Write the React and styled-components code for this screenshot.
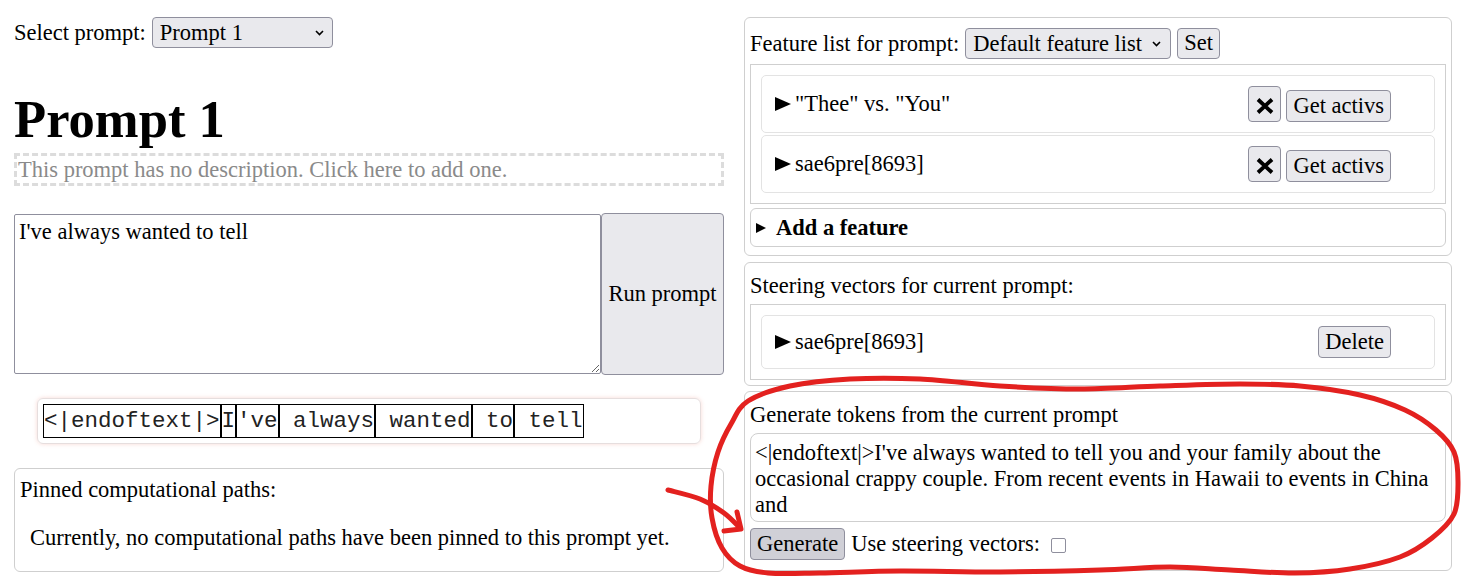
import React from 'react'
import styled, { createGlobalStyle } from 'styled-components'

const GlobalStyle = createGlobalStyle`
  * { box-sizing: border-box; }
  body {
    margin: 0;
    background: #fff;
    color: #000;
    font-family: "Liberation Serif", "Times New Roman", serif;
    font-size: 22.5px;
  }
  button, select, textarea, input {
    font: inherit;
    color: inherit;
  }
`

const Page = styled.div`
  position: relative;
  display: grid;
  grid-template-columns: 710px 708px;
  column-gap: 20px;
  align-items: start;
  width: 1466px;
  height: 580px;
  padding: 17px 14px 0;
  overflow: hidden;
`

const Column = styled.div`
  display: flex;
  flex-direction: column;
  min-width: 0;
`

const Row = styled.div`
  display: flex;
  align-items: center;
  gap: 6px;
  height: 31px;
  white-space: nowrap;
`

const SelectWrap = styled.div`
  position: relative;
  width: ${(p) => p.$w}px;
  height: 31px;

  svg {
    position: absolute;
    right: ${(p) => p.$chev}px;
    top: 13px;
    pointer-events: none;
  }
`

const NativeSelect = styled.select`
  appearance: none;
  width: 100%;
  height: 100%;
  padding: 0 0 0 7px;
  background: #e9e9ed;
  border: 1px solid #8f8f9d;
  border-radius: 4px;
  line-height: 29px;
`

const Button = styled.button`
  height: ${(p) => p.$h || 32}px;
  padding: 0 6px;
  background: ${(p) => (p.$pressed ? '#d0d0d7' : '#e9e9ed')};
  border: 1px solid #8f8f9d;
  border-radius: 4px;
  line-height: 1;
  white-space: nowrap;
`

const Title = styled.h1`
  margin: 42px 0 5px;
  font-size: 52.6px;
  line-height: 58px;
  font-weight: bold;
`

const Description = styled.div`
  border: 3px dashed #dcdcdc;
  color: #8a8a8a;
  line-height: 27px;
  padding: 0 1px;
`

const PromptRow = styled.div`
  display: flex;
  align-items: center;
  height: 162px;
  margin-top: 27px;
`

const PromptInput = styled.textarea`
  width: 587px;
  height: 160px;
  padding: 4px;
  border: 1px solid #8f8f9d;
  border-radius: 2px;
  line-height: 26px;
  resize: both;
`

const RunButton = styled(Button)`
  width: 123px;
  height: 162px;
`

const TokenStrip = styled.div`
  display: flex;
  height: 46px;
  margin: 23px 23px 0;
  padding: 5px;
  border: 1px solid #e6dede;
  border-radius: 6px;
  box-shadow: 0 0 4px rgba(235, 120, 100, 0.28);
`

const Token = styled.span`
  height: 34px;
  border: 1px solid #000;
  font-family: "Liberation Mono", "Courier New", monospace;
  font-size: 22.5px;
  line-height: 32px;
  white-space: pre;
  color: #222;
`

const PinnedBox = styled.div`
  height: 104px;
  margin-top: 24px;
  padding: 8px 5px;
  border: 1px solid #cfcfcf;
  border-radius: 6px;
  line-height: 26px;
`

const PinnedNote = styled.p`
  margin: 22px 0 0;
  padding-left: 10px;
`

const Panel = styled.section`
  display: flex;
  flex-direction: column;
  margin-top: ${(p) => p.$mt || 0}px;
  padding: 10px 5px ${(p) => p.$pb}px;
  border: 1px solid #cfcfcf;
  border-radius: 6px;
`

const PanelTitle = styled.div`
  line-height: 26px;
`

const ItemList = styled.div`
  display: flex;
  flex-direction: column;
  gap: 2px;
  margin-top: 5px;
  padding: 10px;
  border: 1px solid #cfcfcf;
`

const Item = styled.div`
  display: flex;
  align-items: center;
  padding: 10px 43px 10px 13px;
  border: 1px solid #e3e3e3;
  border-radius: 5px;
`

const Arrow = styled.span`
  width: 0;
  height: 0;
  margin-right: 4px;
  border-left: 16px solid #000;
  border-top: 7.5px solid transparent;
  border-bottom: 7.5px solid transparent;
`

const ItemName = styled.span`
  flex: 1;
  line-height: 26px;
`

const ItemActions = styled.div`
  display: flex;
  align-items: flex-end;
  gap: 5px;
`

const CloseButton = styled(Button)`
  width: 33px;
  height: 36px;
  padding: 0;
  display: flex;
  align-items: center;
  justify-content: center;

  svg {
    margin-top: 4px;
  }
`

const AddFeature = styled.div`
  display: flex;
  align-items: center;
  height: 39px;
  margin-top: 4px;
  padding: 0 5px;
  border: 1px solid #cfcfcf;
  border-radius: 6px;
  font-weight: bold;
`

const Marker = styled.span`
  width: 0;
  height: 0;
  margin-right: 10px;
  border-left: 10px solid #000;
  border-top: 5.5px solid transparent;
  border-bottom: 5.5px solid transparent;
`

const Output = styled.div`
  height: 89px;
  margin-top: 5px;
  padding: 6px 4px;
  border: 1px solid #cfcfcf;
  border-radius: 8px;
  line-height: 26px;
`

const GenerateRow = styled.div`
  display: flex;
  align-items: center;
  gap: 6px;
  margin-top: 6px;
`

const Check = styled.input`
  appearance: none;
  flex: none;
  width: 15px;
  height: 15px;
  margin: 2px 0 0 5px;
  border: 1px solid #8f8f9d;
  border-radius: 2px;
  background: #fff;
`

const Scribble = styled.svg`
  position: absolute;
  left: 0;
  top: 0;
  pointer-events: none;
`

const Chevron = () => (
  <svg width="9" height="6" viewBox="0 0 9 6">
    <path d="M1 1l3.5 3.5L8 1" fill="none" stroke="#000" strokeWidth="1.6" />
  </svg>
)

const Cross = () => (
  <svg width="18" height="16" viewBox="0 0 18 16">
    <path d="M2 1.5l14 13M16 1.5l-14 13" stroke="#000" strokeWidth="3.8" strokeLinecap="butt" />
  </svg>
)

// catmull-rom through the points, so the pen marks stay smooth
const smooth = (pts, closed) => {
  const n = pts.length
  const at = (i) => (closed ? pts[(i + n) % n] : pts[Math.max(0, Math.min(n - 1, i))])
  let d = `M${pts[0][0]},${pts[0][1]}`
  const end = closed ? n : n - 1
  for (let i = 0; i < end; i++) {
    const [p0, p1, p2, p3] = [at(i - 1), at(i), at(i + 1), at(i + 2)]
    const c1 = [p1[0] + (p2[0] - p0[0]) / 6, p1[1] + (p2[1] - p0[1]) / 6]
    const c2 = [p2[0] - (p3[0] - p1[0]) / 6, p2[1] - (p3[1] - p1[1]) / 6]
    d += ` C${c1[0]},${c1[1]} ${c2[0]},${c2[1]} ${p2[0]},${p2[1]}`
  }
  return d
}

const loop = [
  [748, 401], [790, 386], [850, 379], [920, 379], [1000, 386], [1080, 389],
  [1160, 386], [1240, 384], [1300, 386], [1360, 395], [1405, 410], [1436, 430],
  [1454, 452], [1458, 482], [1454, 514], [1432, 538], [1400, 557], [1350, 569],
  [1295, 573], [1230, 570], [1170, 567], [1100, 570], [1000, 572], [900, 571],
  [820, 573], [768, 573], [740, 566], [722, 548], [712, 518], [711, 486],
  [718, 452], [731, 424],
]

const arrow = [[668, 490], [700, 499], [724, 513], [740, 528]]

const tokens = ['<|endoftext|>', 'I', "'ve", ' always', ' wanted', ' to', ' tell']
const features = ['"Thee" vs. "You"', 'sae6pre[8693]']

export default function App() {
  return (
    <>
      <GlobalStyle />
      <Page>
        <Column>
          <Row>
            Select prompt:
            <SelectWrap $w={181} $chev={9}>
              <NativeSelect defaultValue="p1">
                <option value="p1">Prompt 1</option>
              </NativeSelect>
              <Chevron />
            </SelectWrap>
          </Row>
          <Title>Prompt 1</Title>
          <Description>This prompt has no description. Click here to add one.</Description>
          <PromptRow>
            <PromptInput defaultValue="I've always wanted to tell" />
            <RunButton>Run prompt</RunButton>
          </PromptRow>
          <TokenStrip>
            {tokens.map((t, i) => (
              <Token key={i}>{t}</Token>
            ))}
          </TokenStrip>
          <PinnedBox>
            Pinned computational paths:
            <PinnedNote>Currently, no computational paths have been pinned to this prompt yet.</PinnedNote>
          </PinnedBox>
        </Column>

        <Column>
          <Panel $pb={8}>
            <Row>
              Feature list for prompt:
              <SelectWrap $w={206} $chev={10}>
                <NativeSelect defaultValue="default">
                  <option value="default">Default feature list</option>
                </NativeSelect>
                <Chevron />
              </SelectWrap>
              <Button $h={31}>Set</Button>
            </Row>
            <ItemList>
              {features.map((f) => (
                <Item key={f}>
                  <Arrow />
                  <ItemName>{f}</ItemName>
                  <ItemActions>
                    <CloseButton>
                      <Cross />
                    </CloseButton>
                    <Button>Get activs</Button>
                  </ItemActions>
                </Item>
              ))}
            </ItemList>
            <AddFeature>
              <Marker />
              Add a feature
            </AddFeature>
          </Panel>

          <Panel $mt={6} $pb={5}>
            <PanelTitle>Steering vectors for current prompt:</PanelTitle>
            <ItemList>
              <Item>
                <Arrow />
                <ItemName>sae6pre[8693]</ItemName>
                <Button>Delete</Button>
              </Item>
            </ItemList>
          </Panel>

          <Panel $mt={5} $pb={10}>
            <PanelTitle>Generate tokens from the current prompt</PanelTitle>
            <Output>
              &lt;|endoftext|&gt;I've always wanted to tell you and your family about the occasional crappy
              couple. From recent events in Hawaii to events in China and
            </Output>
            <GenerateRow>
              <Button $pressed>Generate</Button>
              Use steering vectors:
              <Check type="checkbox" />
            </GenerateRow>
          </Panel>
        </Column>

        <Scribble width="1466" height="580" viewBox="0 0 1466 580">
          <g fill="none" stroke="#e3211f" strokeWidth="5" strokeLinecap="round" strokeLinejoin="round">
            <path d={smooth(loop, true)} />
            <path d={smooth(arrow, false)} />
            <path d="M737 512L741 529L724 531" />
          </g>
        </Scribble>
      </Page>
    </>
  )
}
